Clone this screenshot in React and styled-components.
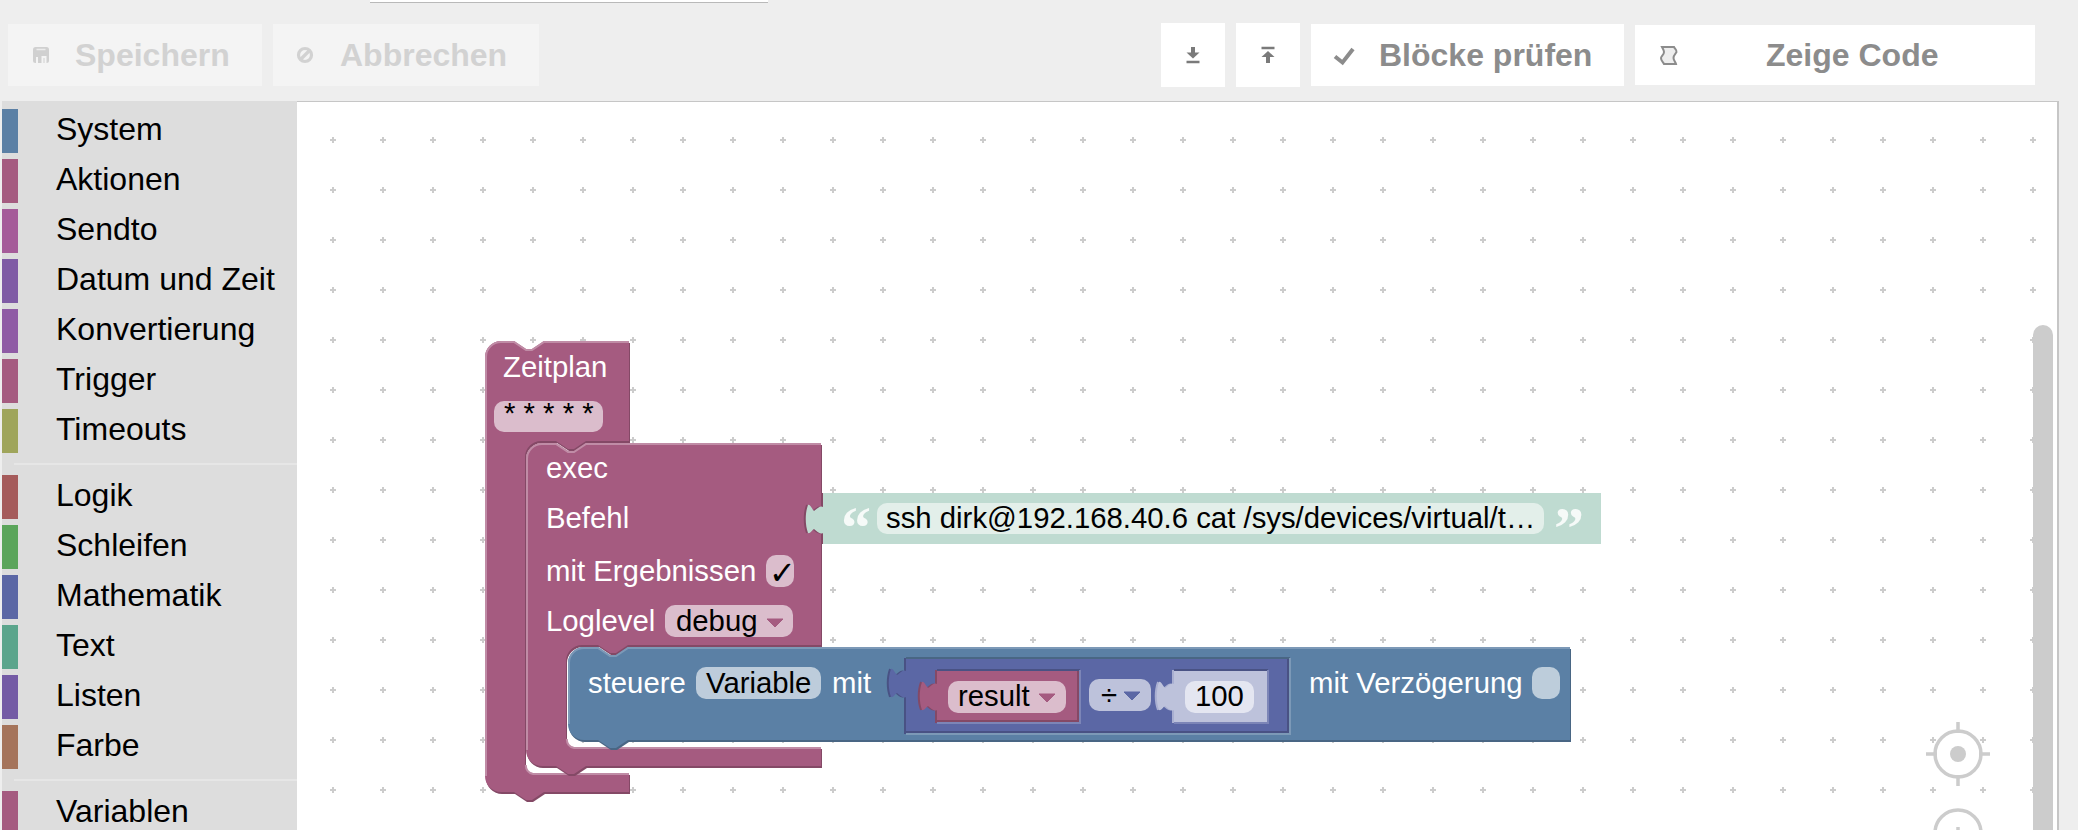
import styled, { createGlobalStyle } from 'styled-components';

const GlobalStyle = createGlobalStyle`
  html, body {
    margin: 0;
    height: 830px;
    overflow: hidden;
    background-color: #eeeeee;
    font-family: "Liberation Sans", Arial, sans-serif;
  }
`;

const Page = styled.div`
  display: flex;
  flex-direction: column;
  height: 830px;
  overflow: hidden;
`;
const TopStrip = styled.div`
  height: 3px;
  padding-left: 370px;
`;
const NameInput = styled.div`
  width: 398px;
  height: 2px;
  background-color: #ffffff;
  border-bottom: 1px solid #b9b9b9;
`;
const Toolbar = styled.div`
  display: flex;
  justify-content: space-between;
  align-items: center;
  height: 98px;
  padding: 6px 43px 0 8px;
  box-sizing: border-box;
`;
const ButtonGroup = styled.div`
  display: flex;
  align-items: center;
  gap: 11px;
`;
const Button = styled.div`
  display: flex;
  align-items: center;
  width: ${(p) => p.$width}px;
  height: ${(p) => p.$height || 62}px;
  box-sizing: border-box;
  padding-left: 23px;
  background-color: ${(p) => (p.$disabled ? '#f4f4f4' : '#ffffff')};
  color: ${(p) => (p.$disabled ? '#d2d2d2' : '#8c8c8c')};
  font-size: 32px;
  font-weight: bold;
  white-space: nowrap;
`;
const IconButton = styled(Button)`
  justify-content: center;
  padding-left: 0;
`;
const ButtonIcon = styled.svg`
  flex: none;
  width: 22px;
  height: 22px;
  margin-right: ${(p) => p.$gap}px;
  fill: none;
  stroke: currentColor;
`;
const SmallIcon = styled.svg`
  width: 16px;
  height: 18px;
  fill: #7a7a7a;
  stroke: #7a7a7a;
`;

const Main = styled.div`
  display: flex;
  flex: 1;
  min-height: 0;
  padding-left: 2px;
  padding-right: 19px;
`;
const Toolbox = styled.div`
  display: flex;
  flex-direction: column;
  flex: none;
  width: 295px;
  padding-top: 8px;
  box-sizing: border-box;
  background-color: #dddddd;
  overflow: hidden;
`;
const Category = styled.div`
  display: flex;
  flex: none;
  height: 44px;
  margin-bottom: 6px;
  color: #000000;
  font-size: 32px;
  line-height: 40px;
`;
const Swatch = styled.div`
  flex: none;
  width: 16px;
  margin-right: 38px;
  background-color: ${(p) => p.$color};
`;
const Separator = styled.div`
  flex: none;
  height: 2px;
  margin: 4px 0 10px 12px;
  background-color: #e6e6e6;
`;
const Workspace = styled.div`
  position: relative;
  flex: 1;
  background-color: #ffffff;
  border-top: 1px solid #c6c6c6;
  border-right: 2px solid #c6c6c6;
`;
const Canvas = styled.svg`
  display: block;
  width: 100%;
  height: 100%;
`;
const Scrollbar = styled.div`
  position: absolute;
  top: 223px;
  bottom: 0;
  right: 4px;
  width: 20px;
  border-radius: 10px 10px 0 0;
  background-color: #cccccc;
`;

const BlockLabel = styled.text`
  fill: #ffffff;
  font-family: "Liberation Sans", Arial, sans-serif;
  font-size: 29.33px;
`;
const FieldText = styled(BlockLabel)`
  fill: #000000;
`;
const CheckMark = styled.text`
  fill: #000000;
  font-family: "DejaVu Sans", sans-serif;
  font-size: 32px;
  font-weight: bold;
`;
const Quote = styled.text`
  fill: #ffffff;
  fill-opacity: 0.85;
  font-family: "Liberation Serif", serif;
  font-size: 60px;
  font-weight: bold;
`;
const FieldBox = styled.rect`
  rx: 10px;
  ry: 10px;
  fill: ${(p) => p.$fill};
`;
const DropArrow = styled.path`
  fill: ${(p) => p.$fill};
  stroke: ${(p) => p.$fill};
  stroke-width: 1;
  stroke-linejoin: round;
`;
const Body = styled.path`
  fill: ${(p) => p.$fill};
`;
const Edge = styled.path`
  fill: none;
  stroke: ${(p) => p.$stroke};
  stroke-width: 2;
`;
const ZoomIcon = styled.g`
  fill: none;
  stroke: #cccccc;
  stroke-width: 3.5;
`;

const tones = {
  purple: { fill: '#a55b80', dark: '#844966', light: '#c08ca6' },
  blue: { fill: '#5b80a5', dark: '#496684', light: '#7c99b7' },
  math: { fill: '#5b67a5', dark: '#495284', light: '#7c85b7' },
};

const topGroup = [
  ['System', '#5b80a5'],
  ['Aktionen', '#a55b80'],
  ['Sendto', '#a55b99'],
  ['Datum und Zeit', '#7f5ba5'],
  ['Konvertierung', '#8f5ba5'],
  ['Trigger', '#a55b80'],
  ['Timeouts', '#9fa55b'],
];
const midGroup = [
  ['Logik', '#a55b5b'],
  ['Schleifen', '#5ba55b'],
  ['Mathematik', '#5b67a5'],
  ['Text', '#5ba58c'],
  ['Listen', '#745ba5'],
  ['Farbe', '#a5745b'],
];
const lastGroup = [['Variablen', '#a55b80']];

const notch = 'l12,8 6,0 12,-8';
const notchBack = 'l-12,8 -6,0 -12,-8';

// a block with statement inputs: dark copy behind, body, then the lit edges
const StackBlock = ({ tone, d, lit }) => (
  <g>
    <Body $fill={tone.dark} d={d} transform="translate(1 2)" />
    <Body $fill={tone.fill} d={d} />
    <Edge $stroke={tone.light} d={lit} />
  </g>
);

// a block with a puzzle tab on its left side
const ValueBlock = ({ x, y, w, h, tabTop: t, fill, edge }) => {
  const tab = `V${t + 28} C${x - 3},${t + 30} ${x - 6},${t + 26} ${x - 9},${t + 24} C${x - 11},${t + 25} ${x - 13},${t + 29} ${x - 15},${t + 28} C${x - 18},${t + 20} ${x - 18},${t + 8} ${x - 15},${t} C${x - 13},${t - 1} ${x - 11},${t + 4} ${x - 9},${t + 6} C${x - 6},${t + 4} ${x - 3},${t} ${x},${t + 2}`;
  const d = `M${x},${y} H${x + w} V${y + h} H${x} ${tab} Z`;
  return (
    <g>
      {edge && <Body $fill={edge} d={d} transform="translate(-2 0)" />}
      <Body $fill={fill} d={d} />
    </g>
  );
};

// the bevel round a plugged in value
const Socket = ({ x, y, w, h, tone, shade }) => (
  <g>
    {shade && <Edge $stroke={shade} d={`M${x + w - 2},${y} V${y + h - 2} H${x}`} />}
    <Edge $stroke={tone.dark} d={`M${x},${y} H${x + w}`} />
    <Edge $stroke={tone.light} d={`M${x + w},${y} V${y + h} H${x}`} />
  </g>
);

const arrow = (x, y) => `M${x},${y} h16 l-8,8 Z`;

const CategoryRow = ({ item }) => (
  <Category>
    <Swatch $color={item[1]} />
    {item[0]}
  </Category>
);

const App = () => (
  <Page>
    <GlobalStyle />
    <TopStrip>
      <NameInput />
    </TopStrip>
    <Toolbar>
      <ButtonGroup>
        <Button $disabled $width={254}>
          <ButtonIcon viewBox="0 0 22 22" $gap={22}>
            <rect x="2" y="3" width="16" height="16" rx="2.5" fill="#d0d0d0" stroke="none" />
            <path d="M5.5 5.5h9" stroke="#ececec" strokeWidth="1.5" />
            <path d="M6 19v-6M11.5 19v-6h3v6" stroke="#f4f4f4" strokeWidth="2" />
          </ButtonIcon>
          Speichern
        </Button>
        <Button $disabled $width={266}>
          <ButtonIcon viewBox="0 0 22 22" $gap={22} strokeWidth="3.2">
            <circle cx="9" cy="11" r="6.5" />
            <path d="M4.5 15.5 13.5 6.5" />
          </ButtonIcon>
          Abbrechen
        </Button>
      </ButtonGroup>
      <ButtonGroup>
        <IconButton $width={64} $height={64}>
          <SmallIcon viewBox="0 0 16 18">
            <path d="M8 1v7" fill="none" strokeWidth="4" />
            <path d="M1.5 6.5h13L8 12.5Z" stroke="none" />
            <path d="M1.5 16h13" fill="none" strokeWidth="2.5" />
          </SmallIcon>
        </IconButton>
        <IconButton $width={64} $height={64}>
          <SmallIcon viewBox="0 0 16 18">
            <path d="M1.5 2h13" fill="none" strokeWidth="2.5" />
            <path d="M1.5 11h13L8 5Z" stroke="none" />
            <path d="M8 10v7" fill="none" strokeWidth="4" />
          </SmallIcon>
        </IconButton>
        <Button $width={313}>
          <ButtonIcon viewBox="0 0 22 22" $gap={23} strokeWidth="4" overflow="visible">
            <path d="M1 12.5 8.5 18.5 19 5" />
          </ButtonIcon>
          Blöcke prüfen
        </Button>
        <Button $width={400} $height={60}>
          <ButtonIcon viewBox="0 0 22 22" $gap={86} strokeWidth="2">
            <path d="M4 3h12c1 2 3 3 2.5 5-1 2-3 3-3 6 0 2 2 4 2.5 6H6c-1-2-3-3-3-6 0-2 3-3 3-6 0-2-1-3-2-5Z" fill="#eeeeee" />
          </ButtonIcon>
          Zeige Code
        </Button>
      </ButtonGroup>
    </Toolbar>
    <Main>
      <Toolbox>
        {topGroup.map((item) => (
          <CategoryRow key={item[0]} item={item} />
        ))}
        <Separator />
        {midGroup.map((item) => (
          <CategoryRow key={item[0]} item={item} />
        ))}
        <Separator />
        {lastGroup.map((item) => (
          <CategoryRow key={item[0]} item={item} />
        ))}
      </Toolbox>
      <Workspace>
        {/* viewBox keeps the block coordinates in page pixels */}
        <Canvas viewBox="297 102 1760 728" preserveAspectRatio="xMinYMin slice">
          <defs>
            <pattern id="grid" x="308" y="115" width="50" height="50" patternUnits="userSpaceOnUse">
              <path d="M22 25h6M25 22v6" stroke="#cccccc" strokeWidth="2" />
            </pattern>
          </defs>
          <rect x="297" y="102" width="1760" height="728" fill="url(#grid)" />

          <StackBlock
            tone={tones.purple}
            d={`M485,357 A16,16 0 0 1 501,341 H514 ${notch} H629 V441 H586 ${notchBack} H541 A16,16 0 0 0 525,457 V765 A8,8 0 0 0 533,773 H629 V792 H544 ${notchBack} H501 A16,16 0 0 1 485,776 Z`}
            lit={`M486,776 V357 A15,15 0 0 1 501,342 H514 ${notch} H629 M526,765 A8,8 0 0 0 533,774 H629`}
          />
          <BlockLabel x="503" y="377">Zeitplan</BlockLabel>
          <FieldBox x="494" y="401" width="109" height="31" $fill="#dbbdcc" />
          <FieldText x="504" y="423">* * * * *</FieldText>

          <StackBlock
            tone={tones.purple}
            d={`M526,459 A16,16 0 0 1 542,443 H556 ${notch} H821 V645 H628 ${notchBack} H582 A16,16 0 0 0 566,661 V739 A8,8 0 0 0 574,747 H821 V766 H586 ${notchBack} H542 A16,16 0 0 1 526,750 Z`}
            lit={`M527,750 V459 A15,15 0 0 1 542,444 H556 ${notch} H821 M567,739 A8,8 0 0 0 574,748 H821`}
          />
          <BlockLabel x="546" y="478">exec</BlockLabel>
          <BlockLabel x="546" y="528">Befehl</BlockLabel>
          <BlockLabel x="546" y="581">mit Ergebnissen</BlockLabel>
          <FieldBox x="766" y="555" width="28" height="32" $fill="#dbbdcc" />
          <CheckMark x="769" y="584">✓</CheckMark>
          <BlockLabel x="546" y="631">Loglevel</BlockLabel>
          <FieldBox x="665" y="605" width="128" height="32" $fill="#dbbdcc" />
          <FieldText x="676" y="631">debug</FieldText>
          <DropArrow $fill="#a55b80" d={arrow(767, 619)} />

          <ValueBlock x={823} y={493} w={778} h={51} tabTop={505} fill="#bfdbd1" edge="#844966" />
          <Quote x="841" y="548">“</Quote>
          <FieldBox x="877" y="503" width="667" height="31" $fill="#e3efea" />
          <FieldText x="886" y="528">ssh dirk@192.168.40.6 cat /sys/devices/virtual/t…</FieldText>
          <Quote x="1554" y="548">”</Quote>

          <StackBlock
            tone={tones.blue}
            d={`M568,663 A16,16 0 0 1 584,647 H598 ${notch} H1570 V740 H628 ${notchBack} H584 A16,16 0 0 1 568,724 Z`}
            lit={`M569,724 V663 A15,15 0 0 1 584,648 H598 ${notch} H1570`}
          />
          <BlockLabel x="588" y="693">steuere</BlockLabel>
          <FieldBox x="696" y="667" width="125" height="32" $fill="#bdccdb" />
          <FieldText x="706" y="693">Variable</FieldText>
          <BlockLabel x="832" y="693">mit</BlockLabel>

          <ValueBlock x={906} y={658} w={384} h={76} tabTop={669} fill="#5b67a5" edge="#495284" />
          <Socket x={906} y={658} w={384} h={76} tone={tones.blue} shade="#495284" />

          <ValueBlock x={937} y={670} w={143} h={53} tabTop={682} fill="#a55b80" edge="#844966" />
          <Socket x={937} y={670} w={143} h={53} tone={tones.math} shade="#844966" />
          <FieldBox x="948" y="681" width="118" height="32" $fill="#dbbdcc" />
          <FieldText x="958" y="706">result</FieldText>
          <DropArrow $fill="#a55b80" d={arrow(1039, 694)} />

          <FieldBox x="1089" y="679" width="62" height="32" $fill="#bdc2db" />
          <FieldText x="1101" y="705">÷</FieldText>
          <DropArrow $fill="#5b67a5" d={arrow(1124, 692)} />

          <ValueBlock x={1174} y={670} w={94} h={53} tabTop={682} fill="#bdc2db" edge="#a9afd1" />
          <Socket x={1174} y={670} w={94} h={53} tone={tones.math} />
          <FieldBox x="1185" y="681" width="69" height="32" $fill="#e4e6f1" />
          <FieldText x="1195" y="706">100</FieldText>

          <BlockLabel x="1309" y="693">mit Verzögerung</BlockLabel>
          <FieldBox x="1532" y="667" width="28" height="32" $fill="#bdcddb" />

          <ZoomIcon>
            <circle cx="1958" cy="754" r="23" />
            <path d="M1958 722v11M1958 775v11M1926 754h11M1979 754h11" />
            <circle cx="1958" cy="754" r="8" fill="#cccccc" stroke="none" />
            <circle cx="1958" cy="833" r="23" />
            <path d="M1958 827v10" />
          </ZoomIcon>
        </Canvas>
        <Scrollbar />
      </Workspace>
    </Main>
  </Page>
);

export default App;
